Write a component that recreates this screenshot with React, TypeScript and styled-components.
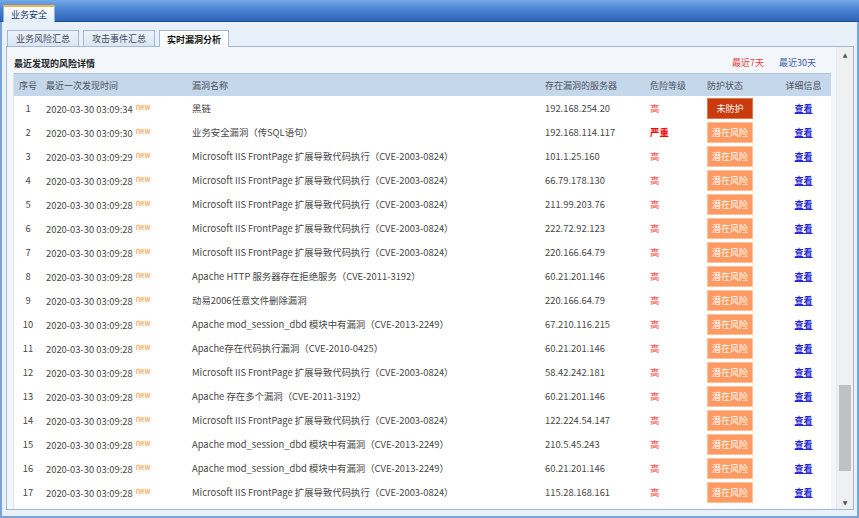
import styled, { createGlobalStyle } from "styled-components";

const GlobalStyle = createGlobalStyle`
  html, body {
    margin: 0;
    padding: 0;
    background: #ffffff;
  }
  body {
    font-family: "Noto Sans CJK SC", "Noto Sans", sans-serif;
    font-size: 9px;
    color: #444;
  }
`;

type Row = {
  time: string;
  name: string;
  server: string;
  level: "高" | "严重";
  status: "未防护" | "潜在风险";
};

const IIS = "Microsoft IIS FrontPage 扩展导致代码执行（CVE-2003-0824）";
const DBD = "Apache mod_session_dbd 模块中有漏洞（CVE-2013-2249）";
const T28 = "2020-03-30 03:09:28";

const rows: Row[] = [
  { time: "2020-03-30 03:09:34", name: "黑链", server: "192.168.254.20", level: "高", status: "未防护" },
  { time: "2020-03-30 03:09:30", name: "业务安全漏洞（传SQL语句）", server: "192.168.114.117", level: "严重", status: "潜在风险" },
  { time: "2020-03-30 03:09:29", name: IIS, server: "101.1.25.160", level: "高", status: "潜在风险" },
  { time: T28, name: IIS, server: "66.79.178.130", level: "高", status: "潜在风险" },
  { time: T28, name: IIS, server: "211.99.203.76", level: "高", status: "潜在风险" },
  { time: T28, name: IIS, server: "222.72.92.123", level: "高", status: "潜在风险" },
  { time: T28, name: IIS, server: "220.166.64.79", level: "高", status: "潜在风险" },
  { time: T28, name: "Apache HTTP 服务器存在拒绝服务（CVE-2011-3192）", server: "60.21.201.146", level: "高", status: "潜在风险" },
  { time: T28, name: "动易2006任意文件删除漏洞", server: "220.166.64.79", level: "高", status: "潜在风险" },
  { time: T28, name: DBD, server: "67.210.116.215", level: "高", status: "潜在风险" },
  { time: T28, name: "Apache存在代码执行漏洞（CVE-2010-0425）", server: "60.21.201.146", level: "高", status: "潜在风险" },
  { time: T28, name: IIS, server: "58.42.242.181", level: "高", status: "潜在风险" },
  { time: T28, name: "Apache 存在多个漏洞（CVE-2011-3192）", server: "60.21.201.146", level: "高", status: "潜在风险" },
  { time: T28, name: IIS, server: "122.224.54.147", level: "高", status: "潜在风险" },
  { time: T28, name: DBD, server: "210.5.45.243", level: "高", status: "潜在风险" },
  { time: T28, name: DBD, server: "60.21.201.146", level: "高", status: "潜在风险" },
  { time: T28, name: IIS, server: "115.28.168.161", level: "高", status: "潜在风险" },
];

const App = () => {
  return (
    <>
      <GlobalStyle />
      <Window>
        <TopBar>
          <OuterTab>业务安全</OuterTab>
        </TopBar>
        <Body>
          <TabRow>
            <Tab>业务风险汇总</Tab>
            <Tab>攻击事件汇总</Tab>
            <Tab active>实时漏洞分析</Tab>
          </TabRow>
          <Panel>
            <Content>
              <TitleBar>
                <Title>最近发现的风险详情</Title>
                <RangeLinks>
                  <RangeLink active>最近7天</RangeLink>
                  <RangeLink>最近30天</RangeLink>
                </RangeLinks>
              </TitleBar>
              <TableBox>
                <Table>
                  <colgroup>
                    <col style={{ width: 28 }} />
                    <col style={{ width: 146 }} />
                    <col style={{ width: 353 }} />
                    <col style={{ width: 105 }} />
                    <col style={{ width: 57 }} />
                    <col style={{ width: 73 }} />
                    <col />
                  </colgroup>
                  <thead>
                    <tr>
                      <Th center>序号</Th>
                      <Th>最近一次发现时间</Th>
                      <Th>漏洞名称</Th>
                      <Th>存在漏洞的服务器</Th>
                      <Th>危险等级</Th>
                      <Th>防护状态</Th>
                      <Th center>详细信息</Th>
                    </tr>
                  </thead>
                  <tbody>
                    {rows.map((r, i) => (
                      <tr key={i}>
                        <Td center>{i + 1}</Td>
                        <Td>
                          {r.time}
                          <NewMark>new</NewMark>
                        </Td>
                        <Td>{r.name}</Td>
                        <Td>{r.server}</Td>
                        <Td>
                          <Level severe={r.level === "严重"}>{r.level}</Level>
                        </Td>
                        <Td>
                          <Status danger={r.status === "未防护"}>{r.status}</Status>
                        </Td>
                        <Td center>
                          <ViewLink>查看</ViewLink>
                        </Td>
                      </tr>
                    ))}
                  </tbody>
                </Table>
              </TableBox>
            </Content>
            <ScrollBar>
              <Arrow>▲</Arrow>
              <Track>
                <Thumb />
              </Track>
              <Arrow>▼</Arrow>
            </ScrollBar>
          </Panel>
        </Body>
      </Window>
    </>
  );
};

const Window = styled.div`
  width: 859px;
  height: 518px;
  box-sizing: border-box;
  border: 2px solid #7aa4d8;
  border-top: none;
  background: #e8f0fa;
  display: flex;
  flex-direction: column;
`;

const TopBar = styled.div`
  height: 22px;
  box-sizing: border-box;
  background: linear-gradient(#74a8e6, #4a84d2 45%, #2d64b8);
  border-bottom: 1px solid #1f4f9c;
  display: flex;
  align-items: flex-end;
  padding-left: 3px;
  margin: 0 -2px;
`;

const OuterTab = styled.div`
  height: 17px;
  box-sizing: border-box;
  padding: 0 7px;
  display: flex;
  align-items: center;
  background: linear-gradient(#ffffff, #e2edfa);
  border: 1px solid #8fb2dc;
  border-top: 2px solid #f6b443;
  border-bottom: none;
  margin-bottom: -1px;
  color: #1c3c6c;
  font-size: 9px;
`;

const Body = styled.div`
  flex: 1;
  display: flex;
  flex-direction: column;
  padding: 8px 3px 6px 4px;
  min-height: 0;
`;

const TabRow = styled.div`
  display: flex;
  align-items: flex-end;
  gap: 4px;
  height: 16px;
  padding-left: 1px;
`;

const Tab = styled.div<{ active?: boolean }>`
  height: ${({ active }) => (active ? "17px" : "16px")};
  box-sizing: border-box;
  padding: 0 ${({ active }) => (active ? "7px" : "8px")};
  display: flex;
  align-items: center;
  border: 1px solid #a3b8d6;
  border-bottom: none;
  background: ${({ active }) =>
    active ? "#ffffff" : "linear-gradient(#eef3fa, #dbe5f3)"};
  color: ${({ active }) => (active ? "#111" : "#3c4a5c")};
  font-weight: ${({ active }) => (active ? "bold" : "normal")};
  font-size: 9px;
  position: relative;
  z-index: ${({ active }) => (active ? 1 : 0)};
  margin-bottom: ${({ active }) => (active ? "-1px" : "0")};
`;

const Panel = styled.div`
  flex: 1;
  min-height: 0;
  display: flex;
  border: 1px solid #a3b8d6;
  background: #f3f7fc;
`;

const Content = styled.div`
  flex: 1;
  display: flex;
  flex-direction: column;
  padding: 0 5px 0 6px;
  min-width: 0;
  overflow: hidden;
`;

const TitleBar = styled.div`
  height: 26px;
  box-sizing: border-box;
  flex-shrink: 0;
  display: flex;
  align-items: flex-end;
  justify-content: space-between;
  padding: 0 15px 3px 1px;
`;

const Title = styled.div`
  font-weight: bold;
  color: #222;
  font-size: 9px;
`;

const RangeLinks = styled.div`
  display: flex;
  gap: 15px;
  padding-bottom: 1px;
`;

const RangeLink = styled.span<{ active?: boolean }>`
  color: ${({ active }) => (active ? "#e83a3a" : "#3a5aa6")};
  font-size: 9px;
  cursor: pointer;
`;

const TableBox = styled.div`
  flex: 1;
  min-height: 0;
  background: #ffffff;
  border-left: 1px solid #dbe4ef;
  overflow: hidden;
`;

const Table = styled.table`
  width: 100%;
  table-layout: fixed;
  border-collapse: collapse;
`;

const Th = styled.th<{ center?: boolean }>`
  height: 22px;
  padding: 0 4px;
  background: #c5d7eb;
  color: #4a5260;
  font-weight: normal;
  font-size: 9px;
  text-align: ${({ center }) => (center ? "center" : "left")};
  white-space: nowrap;
  border-top: 1px solid #aec3de;
`;

const Td = styled.td<{ center?: boolean }>`
  height: 24px;
  padding: 0 4px;
  font-size: 9.4px;
  color: #474747;
  text-align: ${({ center }) => (center ? "center" : "left")};
  white-space: nowrap;
  vertical-align: middle;
`;

const NewMark = styled.span`
  color: #ff8a1c;
  font-size: 7.5px;
  margin-left: 3px;
  vertical-align: 3px;
`;

const Level = styled.span<{ severe?: boolean }>`
  color: ${({ severe }) => (severe ? "#ff0000" : "#ff4545")};
  font-weight: ${({ severe }) => (severe ? "bold" : "normal")};
`;

const Status = styled.span<{ danger?: boolean }>`
  display: inline-flex;
  align-items: center;
  justify-content: center;
  width: 46px;
  height: 21px;
  box-sizing: border-box;
  color: #ffffff;
  background: ${({ danger }) => (danger ? "#c93b0c" : "#ff9a63")};
  border: 1px solid ${({ danger }) => (danger ? "#e0764c" : "#ffc19c")};
  font-size: 9px;
`;

const ViewLink = styled.a`
  color: #2a2ad8;
  text-decoration: underline;
  font-weight: bold;
  font-size: 9px;
  cursor: pointer;
`;

const ScrollBar = styled.div`
  width: 16px;
  flex-shrink: 0;
  display: flex;
  flex-direction: column;
  background: #f0f0f0;
  border-left: 1px solid #e4e9f0;
`;

const Arrow = styled.div`
  height: 14px;
  display: flex;
  align-items: center;
  justify-content: center;
  color: #555;
  font-size: 6px;
  font-family: "DejaVu Sans", sans-serif;
`;

const Track = styled.div`
  flex: 1;
  position: relative;
`;

const Thumb = styled.div`
  position: absolute;
  left: 2px;
  right: 2px;
  top: 324px;
  height: 86px;
  background: #c1c1c1;
`;

export default App;
